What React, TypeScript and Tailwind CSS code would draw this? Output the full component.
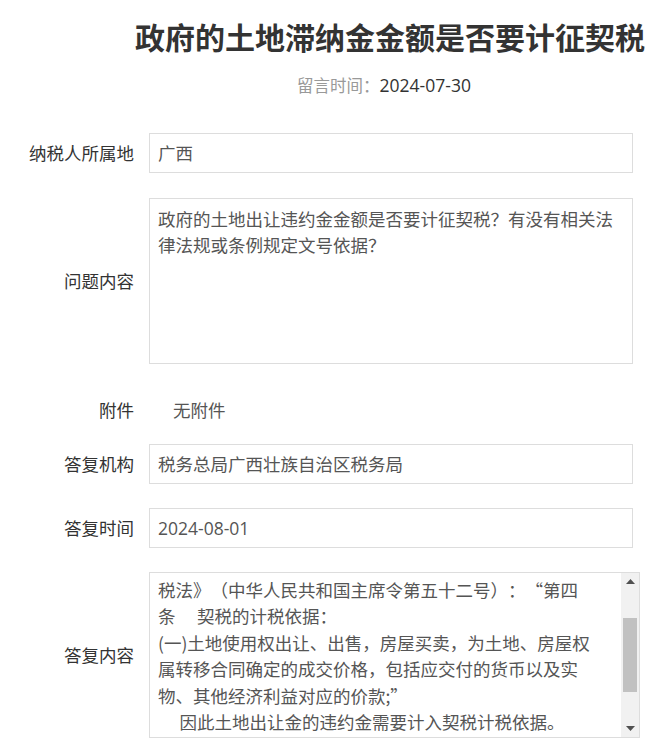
import type { ReactNode } from 'react'

interface FieldRowProps {
  label: string
  children: ReactNode
  className?: string
}

function FieldRow({ label, children, className = '' }: FieldRowProps) {
  return (
    <div className={`flex items-center gap-[15px] ${className}`}>
      <div className="w-[134px] shrink-0 text-right text-[17.5px] text-[#333]">
        {label}
      </div>
      {children}
    </div>
  )
}

function FakeScrollbar() {
  return (
    <div className="flex w-[18px] shrink-0 flex-col bg-[#f1f1f1]">
      <div className="flex h-[17px] items-center justify-center">
        <svg width="9" height="5" viewBox="0 0 9 5">
          <polygon points="0,5 9,5 4.5,0" fill="#505050" />
        </svg>
      </div>
      <div className="flex-1 px-[2px]">
        <div className="mt-[28px] h-[74px] w-full bg-[#c1c1c1]" />
      </div>
      <div className="flex h-[17px] items-center justify-center">
        <svg width="9" height="5" viewBox="0 0 9 5">
          <polygon points="0,0 9,0 4.5,5" fill="#505050" />
        </svg>
      </div>
    </div>
  )
}

// 答复内容（已滚动到中间位置）
const replyLines = [
  '　　您好！您提交的问题已收悉。根据《中华人民共和国契',
  '税法》（中华人民共和国主席令第五十二号）：“第四',
  '条　 契税的计税依据：',
  '(一)土地使用权出让、出售，房屋买卖，为土地、房屋权',
  '属转移合同确定的成交价格，包括应交付的货币以及实',
  '物、其他经济利益对应的价款;”',
  '　 因此土地出让金的违约金需要计入契税计税依据。',
  '　 　特此答复，欢迎您再次提问。',
]

export default function App() {
  return (
    <div className="min-h-[754px] w-[666px] bg-white pr-[33px] font-['Noto_Sans_CJK_SC','Noto_Sans',sans-serif] text-[#333] [text-spacing-trim:space-all]">
      {/* 标题 */}
      <div className="ml-[135px] pt-[16px] text-center">
        <h1 className="whitespace-nowrap text-[30px] font-bold leading-[40px] text-[#333]">
          政府的土地滞纳金金额是否要计征契税
        </h1>
        <div className="mt-[16px] text-[16.5px] leading-[26px]">
          <span className="text-[#999]">留言时间：</span>
          <span className="font-['Open_Sans',sans-serif] text-[17.5px] text-[#333]">
            2024-07-30
          </span>
        </div>
      </div>

      {/* 表单 */}
      <div className="mt-[35px] flex flex-col">
        <FieldRow label="纳税人所属地">
          <div className="flex h-[40px] flex-1 items-center border border-[#ddd] px-[8px] text-[17.5px] text-[#555]">
            广西
          </div>
        </FieldRow>

        <FieldRow label="问题内容" className="mt-[25px]">
          <div className="h-[166px] flex-1 border border-[#ddd] px-[8px] pt-[7px] text-[17.5px] leading-[26px] text-[#555]">
            政府的土地出让违约金金额是否要计征契税？有没有相关法律法规或条例规定文号依据？
          </div>
        </FieldRow>

        <FieldRow label="附件" className="mt-[26px] h-[40px]">
          <div className="pl-[24px] text-[17.5px] text-[#555]">无附件</div>
        </FieldRow>

        <FieldRow label="答复机构" className="mt-[14px]">
          <div className="flex h-[40px] flex-1 items-center border border-[#ddd] px-[8px] text-[17.5px] text-[#555]">
            税务总局广西壮族自治区税务局
          </div>
        </FieldRow>

        <FieldRow label="答复时间" className="mt-[24px]">
          <div className="flex h-[40px] flex-1 items-center border border-[#ddd] px-[8px] font-['Open_Sans',sans-serif] text-[17.5px] text-[#555]">
            2024-08-01
          </div>
        </FieldRow>

        <FieldRow label="答复内容" className="mt-[24px]">
          <div className="flex h-[166px] flex-1 border border-[#ddd]">
            <div className="flex-1 overflow-hidden px-[8px]">
              <div className="-mt-[23px] text-[17.5px] leading-[26.5px] text-[#555]">
                {replyLines.map((line, i) => (
                  <div key={i} className="whitespace-pre">
                    {line}
                  </div>
                ))}
              </div>
            </div>
            <FakeScrollbar />
          </div>
        </FieldRow>
      </div>
    </div>
  )
}
